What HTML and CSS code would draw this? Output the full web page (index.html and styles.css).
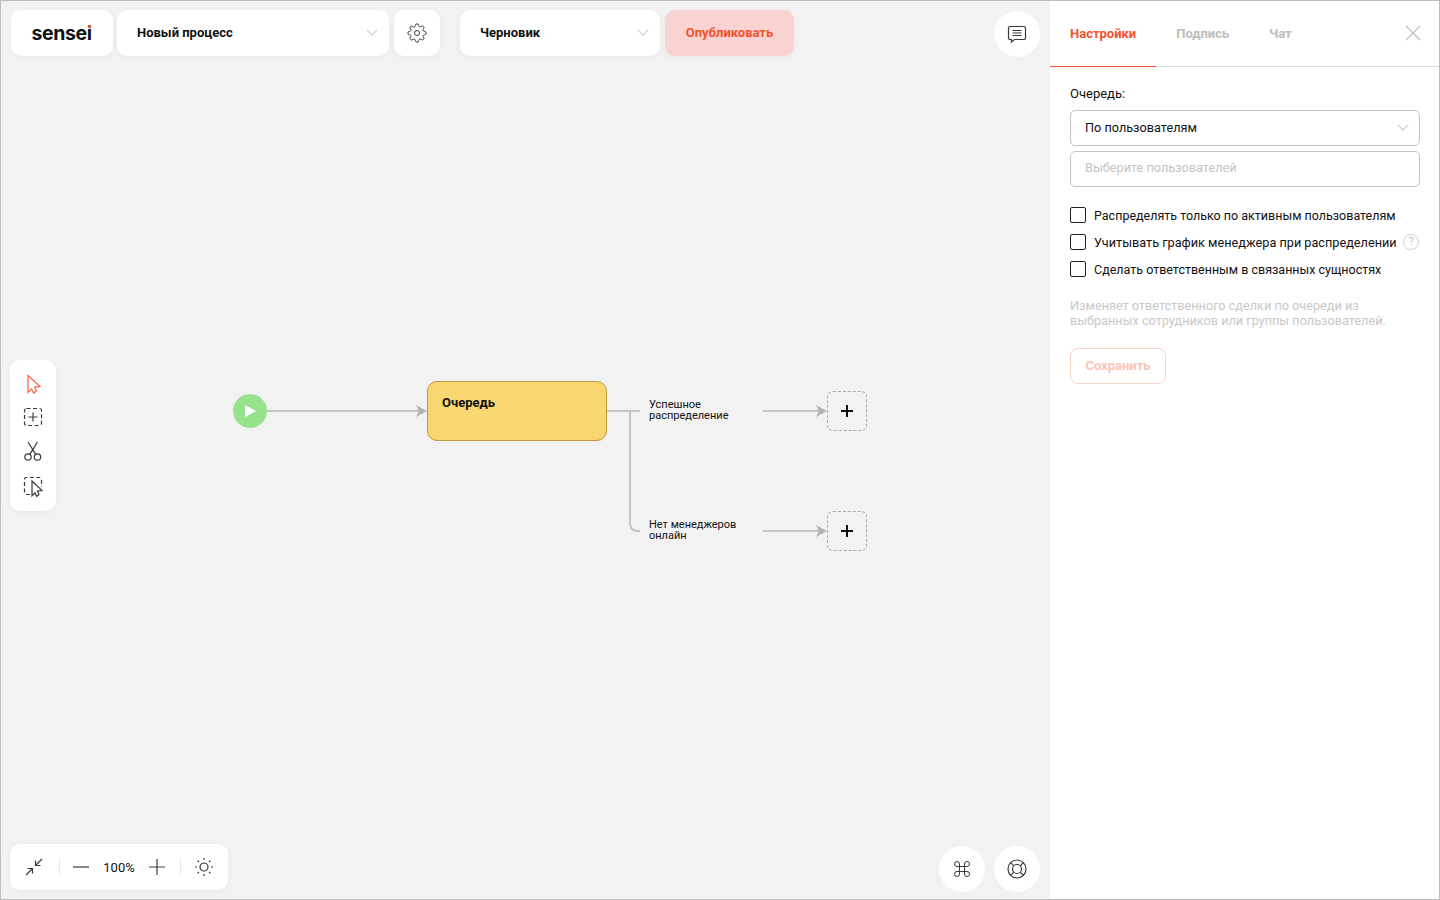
FILE: index.html
```html
<!DOCTYPE html>
<html lang="ru">
<head>
    <meta charset="UTF-8">
    <meta name="viewport" content="width=device-width, initial-scale=1.0">
    <title>Sensei</title>
    <link rel="stylesheet" href="styles.css">
</head>
<body>
    <div class="app">
        <main class="canvas">
            <header class="topbar">
                <div class="card logo"><span class="logo-text">sensei<i class="logo-dot"></i></span></div>
                <div class="card select process-select">
                    <span>Новый процесс</span>
                    <svg class="chevron" viewBox="0 0 12 7"><path d="M1 1l5 5 5-5"/></svg>
                </div>
                <button class="card square gear-btn">
                    <svg class="icon" width="20" height="20" viewBox="0 0 24 24"><circle cx="12" cy="12" r="3"/><path d="M19.4 15a1.65 1.65 0 0 0 .33 1.82l.06.06a2 2 0 0 1 0 2.83 2 2 0 0 1-2.83 0l-.06-.06a1.65 1.65 0 0 0-1.82-.33 1.65 1.65 0 0 0-1 1.51V21a2 2 0 0 1-2 2 2 2 0 0 1-2-2v-.09A1.65 1.65 0 0 0 9 19.4a1.65 1.65 0 0 0-1.82.33l-.06.06a2 2 0 0 1-2.83 0 2 2 0 0 1 0-2.83l.06-.06a1.65 1.65 0 0 0 .33-1.82 1.65 1.65 0 0 0-1.51-1H3a2 2 0 0 1-2-2 2 2 0 0 1 2-2h.09A1.65 1.65 0 0 0 4.6 9a1.65 1.65 0 0 0-.33-1.82l-.06-.06a2 2 0 0 1 0-2.83 2 2 0 0 1 2.83 0l.06.06a1.65 1.65 0 0 0 1.82.33H9a1.65 1.65 0 0 0 1-1.51V3a2 2 0 0 1 2-2 2 2 0 0 1 2 2v.09a1.65 1.65 0 0 0 1 1.51 1.65 1.65 0 0 0 1.82-.33l.06-.06a2 2 0 0 1 2.83 0 2 2 0 0 1 0 2.83l-.06.06a1.65 1.65 0 0 0-.33 1.82V9a1.65 1.65 0 0 0 1.51 1H21a2 2 0 0 1 2 2 2 2 0 0 1-2 2h-.09a1.65 1.65 0 0 0-1.51 1z"/></svg>
                </button>
                <div class="card select status-select">
                    <span>Черновик</span>
                    <svg class="chevron" viewBox="0 0 12 7"><path d="M1 1l5 5 5-5"/></svg>
                </div>
                <button class="publish-btn">Опубликовать</button>
                <button class="round chat-btn">
                    <svg class="icon" width="20" height="20" viewBox="0 0 20 20"><path d="M3 2.500h14a1.500 1.500 0 0 1 1.500 1.500v10a1.500 1.500 0 0 1-1.500 1.500H7.500L4.500 18v-2.500H3A1.500 1.500 0 0 1 1.500 14V4A1.500 1.500 0 0 1 3 2.500z"/><path d="M5.500 6.500h9M5.500 9h9M5.500 11.500h9"/></svg>
                </button>
            </header>

            <div class="card tools">
                <svg class="icon accent" width="20" height="20" viewBox="0 0 20 20"><path d="M5 1.500l12 11-5.500.6 2 4-2.700 2-2.200-4.200-3.600 3.600z"/></svg>
                <svg class="icon" width="20" height="20" viewBox="0 0 20 20"><rect class="dashed" x="1.500" y="1.500" width="17" height="17" rx="2"/><path d="M10 5.500v9M5.500 10h9"/></svg>
                <svg class="icon tool-cut" width="20" height="20" viewBox="0 0 20 20"><circle cx="5" cy="16" r="3.200"/><circle cx="14.500" cy="16" r="3.200"/><path d="M6.800 13.400L14.500 1M12.700 13.400L5 1"/></svg>
                <svg class="icon tool-select" width="20" height="20" viewBox="0 0 20 20"><path class="dashed" d="M7 18.500H3A1.500 1.500 0 0 1 1.500 17V3A1.500 1.500 0 0 1 3 1.500h14A1.500 1.500 0 0 1 18.500 3v8"/><path d="M9 5l10 9.500-4.500.5 1.500 3.500-2.300 1.800-1.800-3.500-2.900 3z"/></svg>
            </div>

            <div class="diagram">
                <svg class="links" width="1049" height="900" viewBox="0 0 1049 900">
                    <path d="M266 410H420M606 410H639M629 410V522q0 8 8 8h2M762 410H820M762 530H820"/>
                    <path class="arrow" d="M426 410l-11-6 3 6-3 6zM826 410l-11-6 3 6-3 6zM826 530l-11-6 3 6-3 6z"/>
                </svg>
                <div class="start-node">
                    <svg width="12" height="12" viewBox="0 0 12 12"><path d="M1 0l11 6-11 6z"/></svg>
                </div>
                <div class="queue-node">Очередь</div>
                <div class="link-label label-one">Успешное<br>распределение</div>
                <div class="link-label label-two">Нет менеджеров<br>онлайн</div>
                <button class="add-node add-one"><svg width="14" height="14" viewBox="0 0 14 14"><path d="M7 1v12M1 7h12"/></svg></button>
                <button class="add-node add-two"><svg width="14" height="14" viewBox="0 0 14 14"><path d="M7 1v12M1 7h12"/></svg></button>
            </div>

            <div class="card zoom-bar">
                <svg class="icon zoom-fit" width="20" height="20" viewBox="0 0 20 20"><path d="M11.500 8.500L18 2M11.500 3.500v5h5M8.500 11.500L2 18M3.500 11.500h5v5"/></svg>
                <span class="divider"></span>
                <svg class="icon zoom-minus" width="18" height="18" viewBox="0 0 18 18"><path d="M1 9h16"/></svg>
                <span class="zoom-value">100%</span>
                <svg class="icon zoom-plus" width="18" height="18" viewBox="0 0 18 18"><path d="M1 9h16M9 1v16"/></svg>
                <span class="divider"></span>
                <svg class="icon zoom-sun" width="20" height="20" viewBox="0 0 20 20"><circle cx="10" cy="10" r="4"/><path d="M10 1v2M10 17v2M1 10h2M17 10h2M3.600 3.600l1.400 1.400M15 15l1.400 1.400M3.600 16.400L5 15M15 5l1.400-1.400"/></svg>
            </div>

            <div class="help-btns">
                <button class="round">
                    <svg class="icon" width="20" height="20" viewBox="0 0 24 24"><path d="M18 3a3 3 0 0 0-3 3v12a3 3 0 0 0 3 3 3 3 0 0 0 3-3 3 3 0 0 0-3-3H6a3 3 0 0 0-3 3 3 3 0 0 0 3 3 3 3 0 0 0 3-3V6a3 3 0 0 0-3-3 3 3 0 0 0-3 3 3 3 0 0 0 3 3h12a3 3 0 0 0 3-3 3 3 0 0 0-3-3z"/></svg>
                </button>
                <button class="round">
                    <svg class="icon" width="20" height="20" viewBox="0 0 20 20"><circle cx="10" cy="10" r="9"/><circle cx="10" cy="10" r="4.500"/><path d="M3.600 3.600l3.200 3.200M16.400 3.600l-3.200 3.200M3.600 16.400l3.200-3.200M16.400 16.400l-3.200-3.200"/></svg>
                </button>
            </div>
        </main>

        <aside class="panel">
            <nav class="tabs">
                <a class="tab active">Настройки</a>
                <a class="tab">Подпись</a>
                <a class="tab">Чат</a>
                <svg class="close" width="16" height="16" viewBox="0 0 16 16"><path d="M1 1l14 14M15 1L1 15"/></svg>
            </nav>
            <form class="settings">
                <label class="field-label">Очередь:</label>
                <div class="field">
                    <span>По пользователям</span>
                    <svg class="chevron" viewBox="0 0 12 7"><path d="M1 1l5 5 5-5"/></svg>
                </div>
                <div class="field placeholder">Выберите пользователей</div>
                <ul class="checks">
                    <li><span class="box"></span>Распределять только по активным пользователям</li>
                    <li class="long-check"><span class="box"></span>Учитывать график менеджера при распределении<span class="hint-mark">?</span></li>
                    <li><span class="box"></span>Сделать ответственным в связанных сущностях</li>
                </ul>
                <p class="hint">Изменяет ответственного сделки по очереди из выбранных сотрудников или группы пользователей.</p>
                <button class="save-btn" type="button">Сохранить</button>
            </form>
        </aside>
    </div>
</body>
</html>
```

FILE: styles.css
```css
* {
    box-sizing: border-box;
}
body {
    margin: 0;
    font-family: Roboto, "Liberation Sans", sans-serif;
    color: #111;
}
button {
    font-family: inherit;
    border: none;
    padding: 0;
}
.app {
    display: flex;
    width: 1440px;
    height: 900px;
    border: 1px solid #bdbdbd;
    overflow: hidden;
}
.canvas {
    position: relative;
    flex: none;
    width: 1049px;
    background: #f2f2f2;
}
.card {
    background: white;
    border-radius: 10px;
    box-shadow: 0px 2px 6px rgba(0, 0, 0, 0.04);
}
.icon {
    fill: none;
    stroke: #3a3a3a;
    stroke-width: 1.2;
}
.icon.accent {
    stroke: #f4623f;
}
.dashed {
    stroke-dasharray: 4 2.500;
}
.chevron {
    width: 12px;
    height: 7px;
    fill: none;
    stroke: #d8d8d8;
    stroke-width: 1.500;
}

/* top bar */
.topbar {
    position: relative;
    z-index: 2;
    display: flex;
    align-items: flex-start;
    padding: 9px 10px 0;
}
.topbar > .card, .publish-btn {
    height: 46px;
}
.logo {
    display: flex;
    align-items: center;
    justify-content: center;
    width: 102px;
    margin-right: 4px;
}
.logo-text {
    position: relative;
    margin-right: 1px;
    font-family: Inter, sans-serif;
    font-size: 19.5px;
    font-weight: 700;
    letter-spacing: -0.4px;
    color: #111;
}
.logo-dot {
    position: absolute;
    right: 1px;
    top: 4px;
    width: 3px;
    height: 3px;
    border-radius: 50%;
    background: #f4512c;
}
.select {
    display: flex;
    align-items: center;
    justify-content: space-between;
    padding: 0 11px 1px 20px;
    font-size: 13px;
    font-weight: 700;
}
.process-select {
    width: 272px;
    margin-right: 5px;
}
.square {
    display: flex;
    align-items: center;
    justify-content: center;
    width: 46px;
}
.gear-btn {
    margin-right: 20px;
}
.status-select {
    width: 200px;
    margin-right: 5px;
}
.publish-btn {
    width: 129px;
    padding-bottom: 1px;
    border-radius: 10px;
    background: #f8d3d2;
    color: #f4512c;
    font-size: 13px;
    font-weight: 700;
    box-shadow: 0px 2px 6px rgba(0, 0, 0, 0.04);
}
.round {
    display: flex;
    align-items: center;
    justify-content: center;
    width: 46px;
    height: 46px;
    border-radius: 50%;
    background: white;
}
.chat-btn {
    margin: 1px 0 0 auto;
}

/* floating tools */
.tools {
    position: absolute;
    left: 9px;
    top: 359px;
    display: flex;
    flex-direction: column;
    align-items: center;
    gap: 13px;
    width: 46px;
    height: 151px;
    padding-top: 14px;
}
.tool-cut {
    margin-top: 1px;
}
.tool-select {
    margin-top: 2px;
    overflow: visible;
}
.zoom-bar {
    position: absolute;
    left: 9px;
    top: 843px;
    display: flex;
    align-items: center;
    width: 218px;
    height: 46px;
    padding-left: 14px;
}
.divider {
    width: 1px;
    height: 16px;
    background: #e6e6e6;
}
.zoom-fit {
    margin-right: 15px;
}
.zoom-minus {
    margin: 0 13px 0 12px;
}
.zoom-value {
    width: 32px;
    font-size: 13px;
    text-align: center;
    white-space: nowrap;
}
.zoom-plus {
    margin: 0 14px 0 13px;
}
.zoom-sun {
    margin-left: 13px;
}
.help-btns {
    position: absolute;
    right: 10px;
    top: 845px;
    display: flex;
    gap: 9px;
}

/* diagram */
.links {
    position: absolute;
    left: 0;
    top: 0;
    fill: none;
    stroke: #c4c4c4;
    stroke-width: 2;
}
.links .arrow {
    fill: #b4b4b4;
    stroke: none;
}
.start-node {
    position: absolute;
    left: 232px;
    top: 393px;
    display: flex;
    align-items: center;
    justify-content: center;
    width: 34px;
    height: 34px;
    border-radius: 50%;
    background: #97e28d;
}
.start-node svg {
    fill: white;
}
.queue-node {
    position: absolute;
    left: 426px;
    top: 380px;
    width: 180px;
    height: 60px;
    padding: 12px 14px;
    border: 1px solid #bc9a3f;
    border-radius: 10px;
    background: #f8d770;
    font-size: 13px;
    font-weight: 700;
    line-height: 17px;
}
.link-label {
    position: absolute;
    left: 648px;
    font-size: 11px;
    line-height: 11px;
    white-space: nowrap;
}
.label-one {
    top: 398px;
}
.label-two {
    top: 518px;
}
.add-node {
    position: absolute;
    left: 826px;
    display: flex;
    align-items: center;
    justify-content: center;
    width: 40px;
    height: 40px;
    border: 1px dashed #a8a8a8;
    border-radius: 6px;
    background: transparent;
}
.add-node svg {
    stroke: #111;
    stroke-width: 2;
}
.add-one {
    top: 390px;
}
.add-two {
    top: 510px;
}

/* right panel */
.panel {
    flex: none;
    width: 389px;
    background: white;
}
.tabs {
    position: relative;
    display: flex;
    height: 66px;
    border-bottom: 1px solid #dcdcdc;
}
.tab {
    height: 66px;
    padding: 25px 20px 0;
    font-size: 13px;
    font-weight: 700;
    color: #bdbdbd;
}
.tab.active {
    color: #f4512c;
    border-bottom: 1px solid #f4512c;
}
.close {
    position: absolute;
    right: 18px;
    top: 24px;
    fill: none;
    stroke: #bdbdbd;
    stroke-width: 1.200;
}
.settings {
    padding: 18px 19px 18px 20px;
    font-size: 12.5px;
}
.field-label {
    display: block;
    height: 25px;
    font-size: 13px;
    line-height: 17px;
}
.field {
    display: flex;
    align-items: center;
    justify-content: space-between;
    height: 36px;
    margin-bottom: 5px;
    padding: 0 10px 1px 14px;
    border: 1px solid #c4c4c4;
    border-radius: 5px;
    font-size: 12.7px;
}
.field.placeholder {
    padding-bottom: 3px;
    color: #c4c4c4;
}
.checks {
    list-style: none;
    margin: 20px 0 0;
    padding: 0;
}
.checks li {
    display: flex;
    align-items: center;
    height: 16px;
    margin-bottom: 11px;
    white-space: nowrap;
}
.checks .long-check {
    font-size: 12.7px;
}
.box {
    flex: none;
    width: 16px;
    height: 16px;
    margin-right: 8px;
    border: 1px solid #222;
    border-radius: 2px;
}
.hint-mark {
    flex: none;
    width: 16px;
    height: 16px;
    margin: 0 1px 0 auto;
    border: 1px solid #d0d0d0;
    border-radius: 50%;
    color: #c4c4c4;
    font-size: 10px;
    line-height: 14px;
    text-align: center;
}
.hint {
    margin: 21px 0 20px;
    color: #c8c8c8;
    font-size: 12.7px;
    line-height: 15px;
}
.save-btn {
    width: 96px;
    height: 36px;
    padding-bottom: 2px;
    border: 1px solid #fbd2c8;
    border-radius: 8px;
    background: white;
    color: #fbc4b6;
    font-size: 13px;
    font-weight: 700;
}
```
